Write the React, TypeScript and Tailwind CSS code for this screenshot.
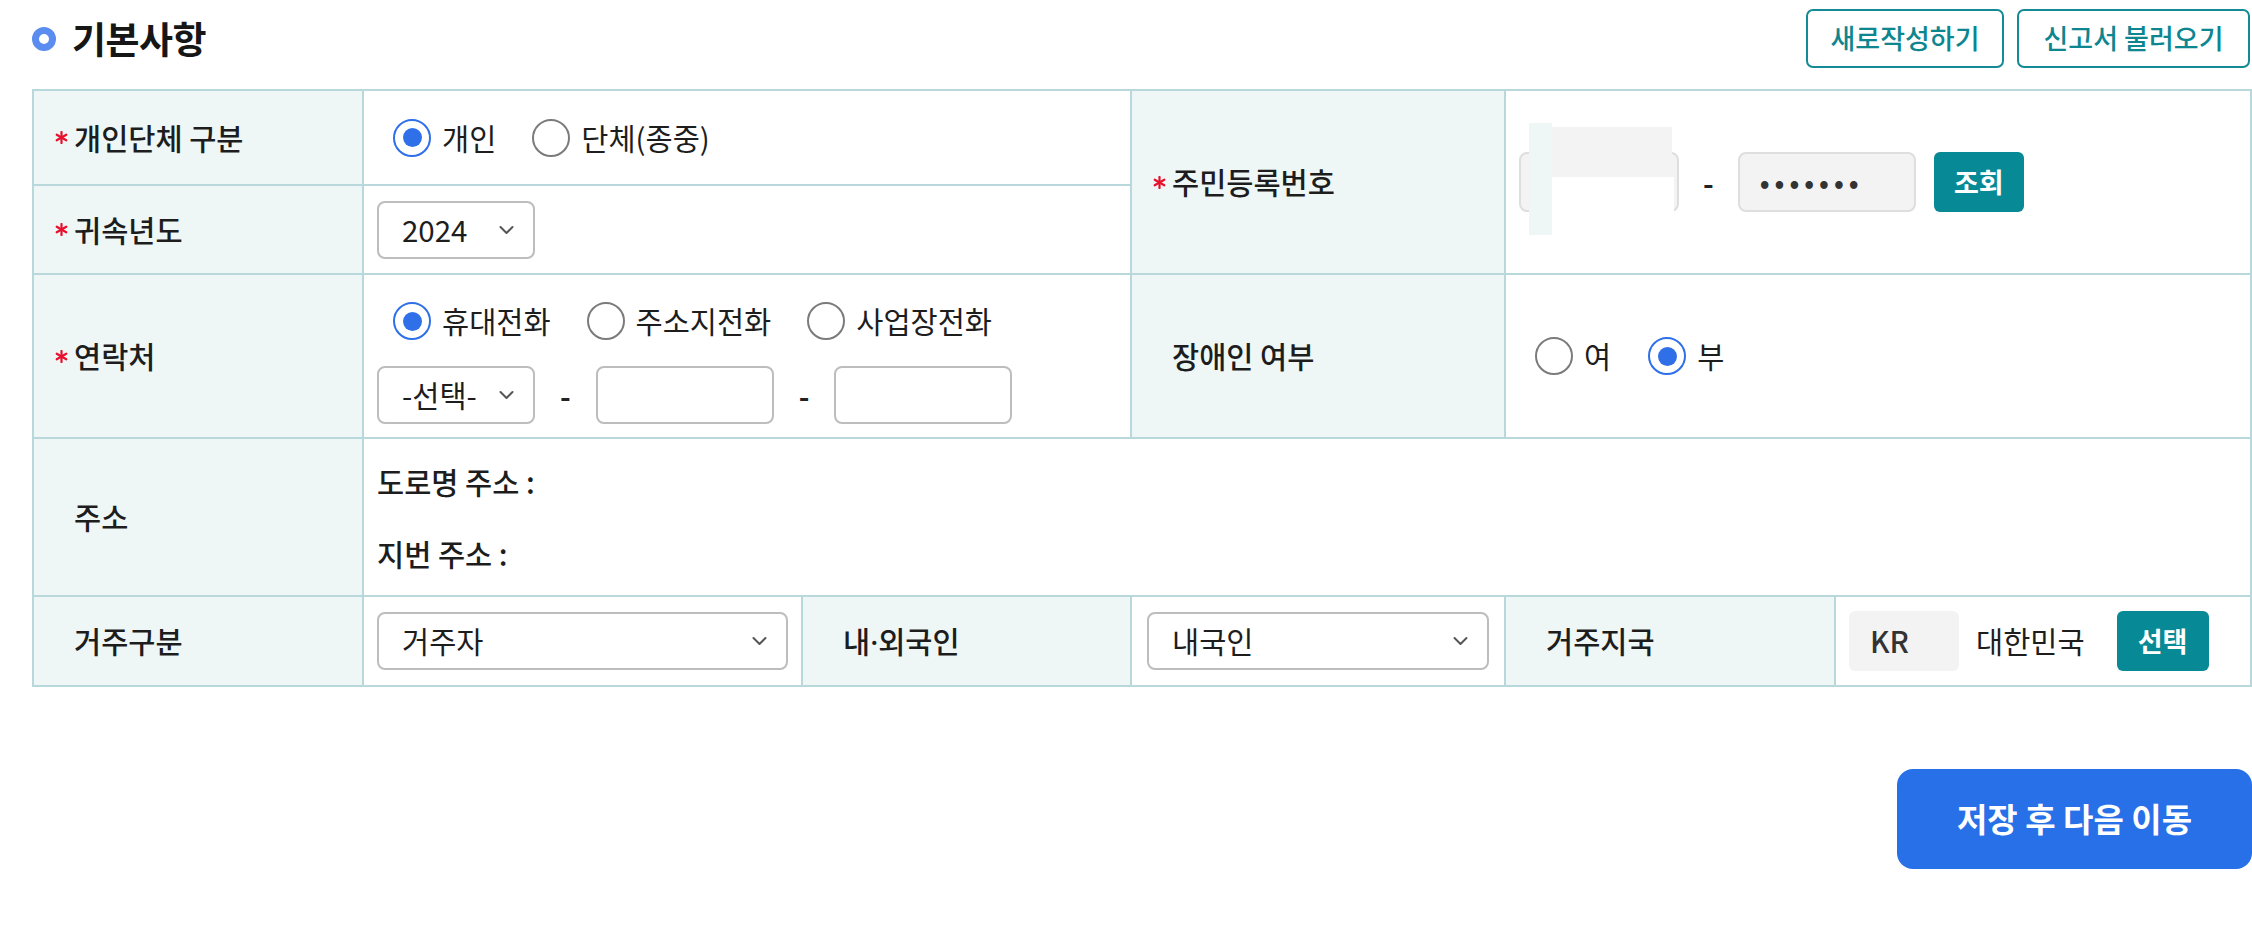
import React from "react";

const FONT = "font-['Noto_Sans_CJK_KR','Noto_Sans',sans-serif]";

function Asterisk() {
  return (
    <svg width="13" height="13" viewBox="0 0 13 13" className="shrink-0">
      <g stroke="#e8112d" strokeWidth="2.2" strokeLinecap="round">
        <line x1="6.5" y1="1" x2="6.5" y2="12" />
        <line x1="1.7" y1="3.7" x2="11.3" y2="9.3" />
        <line x1="1.7" y1="9.3" x2="11.3" y2="3.7" />
      </g>
    </svg>
  );
}

function Chevron() {
  return (
    <svg width="15" height="10" viewBox="0 0 15 10" className="shrink-0">
      <path d="M1.5 2 L7.5 8 L13.5 2" fill="none" stroke="#555" strokeWidth="2" strokeLinecap="round" strokeLinejoin="round" />
    </svg>
  );
}

function Radio({ checked, label }: { checked?: boolean; label: string }) {
  return (
    <label className="flex items-center gap-[11px]">
      <span
        className={`flex h-[38px] w-[38px] shrink-0 items-center justify-center rounded-full border-2 ${
          checked ? "border-[#2f6fe8]" : "border-[#7b7b7b]"
        }`}
      >
        {checked && <span className="h-[19px] w-[19px] rounded-full bg-[#2f6fe8]" />}
      </span>
      <span className="text-[29.5px] leading-none text-[#1d1d1d]">{label}</span>
    </label>
  );
}

function Th({
  children,
  required,
  rowSpan,
}: {
  children: React.ReactNode;
  required?: boolean;
  rowSpan?: number;
}) {
  return (
    <td rowSpan={rowSpan} className="border-2 border-[#b8d8dc] bg-[#eef7f6] pl-[21px] align-middle">
      <div className="flex items-center">
        <span className="flex w-[19px] items-center">{required && <Asterisk />}</span>
        <span className="text-[29.5px] font-medium leading-none text-[#1d1d1d]">{children}</span>
      </div>
    </td>
  );
}

function Select({ value, className = "" }: { value: string; className?: string }) {
  return (
    <div
      className={`flex h-[58px] items-center justify-between rounded-[8px] border-2 border-[#bdbdbd] bg-white pl-[23px] pr-[19px] ${className}`}
    >
      <span className="text-[29.5px] leading-none text-[#1d1d1d]">{value}</span>
      <Chevron />
    </div>
  );
}

function Dash() {
  return <span className="mx-[25px] text-[29px] font-bold leading-none text-[#222]">-</span>;
}

export default function App() {
  return (
    <div className={`${FONT} min-h-[928px] w-full bg-white pl-[32px] pr-[2px] text-[#1d1d1d]`}>
      {/* 제목 + 상단 버튼 */}
      <header className="flex items-center justify-between pt-[9px]">
        <div className="flex items-center gap-[16px]">
          <span className="h-[24px] w-[24px] rounded-full border-[7px] border-[#5a8def]" />
          <h1 className="text-[37px] font-bold leading-none tracking-[-0.5px] text-[#161616]">기본사항</h1>
        </div>
        <div className="flex gap-[13px]">
          <button className="h-[59px] w-[198px] rounded-[7px] border-2 border-[#138a95] bg-white text-[27px] font-medium text-[#0d8690]">
            새로작성하기
          </button>
          <button className="h-[59px] w-[233px] rounded-[7px] border-2 border-[#138a95] bg-white text-[27px] font-medium text-[#0d8690]">
            신고서 불러오기
          </button>
        </div>
      </header>

      {/* 기본사항 표 */}
      <table className="mt-[21px] w-[2218px] table-fixed border-collapse">
        <colgroup>
          <col className="w-[330px]" />
          <col className="w-[439px]" />
          <col className="w-[329px]" />
          <col className="w-[374px]" />
          <col className="w-[330px]" />
          <col className="w-[416px]" />
        </colgroup>
        <tbody>
          <tr className="h-[95px]">
            <Th required>개인단체 구분</Th>
            <td colSpan={2} className="border-2 border-[#b8d8dc] pl-[29px] align-middle">
              <div className="flex items-center gap-[36px]">
                <Radio checked label="개인" />
                <Radio label="단체(종중)" />
              </div>
            </td>
            <Th required rowSpan={2}>
              주민등록번호
            </Th>
            <td colSpan={2} rowSpan={2} className="border-2 border-[#b8d8dc] pl-[13px] align-middle">
              <div className="flex items-center">
                <div className="relative h-[60px] w-[160px]">
                  <div className="h-full w-full rounded-[8px] border-2 border-[#dedede] bg-[#f3f3f3]" />
                  {/* 가림 처리 */}
                  <div className="absolute left-[10px] top-[-29px] h-[112px] w-[23px] bg-[#eef7f6]" />
                  <div className="absolute left-[33px] top-[-25px] h-[50px] w-[120px] bg-[#f3f3f3]" />
                  <div className="absolute left-[33px] top-[25px] h-[38px] w-[122px] bg-white" />
                </div>
                <span className="mx-[24px] text-[29px] font-bold leading-none text-[#222]">-</span>
                <div className="flex h-[60px] w-[178px] items-center rounded-[8px] border-2 border-[#dedede] bg-[#f3f3f3] pl-[20px]">
                  <span className="text-[26px] font-bold leading-none tracking-[5px] text-[#333]">•••••••</span>
                </div>
                <button className="ml-[18px] h-[60px] w-[90px] rounded-[6px] bg-[#088a96] text-[27px] font-bold text-white">
                  조회
                </button>
              </div>
            </td>
          </tr>
          <tr className="h-[89px]">
            <Th required>귀속년도</Th>
            <td colSpan={2} className="border-2 border-[#b8d8dc] pl-[13px] align-middle">
              <Select value="2024" className="w-[158px]" />
            </td>
          </tr>
          <tr className="h-[164px]">
            <Th required>연락처</Th>
            <td colSpan={2} className="border-2 border-[#b8d8dc] pl-[13px] pt-[14px] align-middle">
              <div className="flex flex-col gap-[26px]">
                <div className="ml-[16px] flex items-center gap-[36px]">
                  <Radio checked label="휴대전화" />
                  <Radio label="주소지전화" />
                  <Radio label="사업장전화" />
                </div>
                <div className="flex items-center">
                  <Select value="-선택-" className="w-[158px]" />
                  <Dash />
                  <div className="h-[58px] w-[178px] rounded-[8px] border-2 border-[#bdbdbd] bg-white" />
                  <Dash />
                  <div className="h-[58px] w-[178px] rounded-[8px] border-2 border-[#bdbdbd] bg-white" />
                </div>
              </div>
            </td>
            <Th>장애인 여부</Th>
            <td colSpan={2} className="border-2 border-[#b8d8dc] pl-[29px] align-middle">
              <div className="flex items-center gap-[37px]">
                <Radio label="여" />
                <Radio checked label="부" />
              </div>
            </td>
          </tr>
          <tr className="h-[158px]">
            <Th>주소</Th>
            <td colSpan={5} className="border-2 border-[#b8d8dc] pl-[13px] align-middle">
              <div className="flex flex-col gap-[36px] text-[29.5px] font-medium leading-[36px] text-[#1d1d1d]">
                <p>도로명 주소 :</p>
                <p>지번 주소 :</p>
              </div>
            </td>
          </tr>
          <tr className="h-[90px]">
            <Th>거주구분</Th>
            <td className="border-2 border-[#b8d8dc] px-[13px] align-middle">
              <Select value="거주자" className="w-full" />
            </td>
            <Th>
              내<span className="font-['Noto_Sans',sans-serif]">·</span>외국인
            </Th>
            <td className="border-2 border-[#b8d8dc] px-[15px] align-middle">
              <Select value="내국인" className="w-full" />
            </td>
            <Th>거주지국</Th>
            <td className="border-2 border-[#b8d8dc] pl-[13px] align-middle">
              <div className="flex items-center">
                <div className="flex h-[60px] w-[110px] items-center rounded-[6px] bg-[#f3f3f3] pl-[21px]">
                  <span className="text-[29.5px] font-medium leading-none text-[#333]">KR</span>
                </div>
                <span className="ml-[17px] text-[29.5px] leading-none text-[#1d1d1d]">대한민국</span>
                <button className="ml-[32px] h-[60px] w-[92px] rounded-[6px] bg-[#088a96] text-[27px] font-bold text-white">
                  선택
                </button>
              </div>
            </td>
          </tr>
        </tbody>
      </table>

      <div className="-mr-[2px] mt-[82px] flex justify-end">
        <button className="h-[100px] w-[355px] rounded-[16px] bg-[#2870e8] text-[33px] font-semibold text-white">
          저장 후 다음 이동
        </button>
      </div>
    </div>
  );
}
